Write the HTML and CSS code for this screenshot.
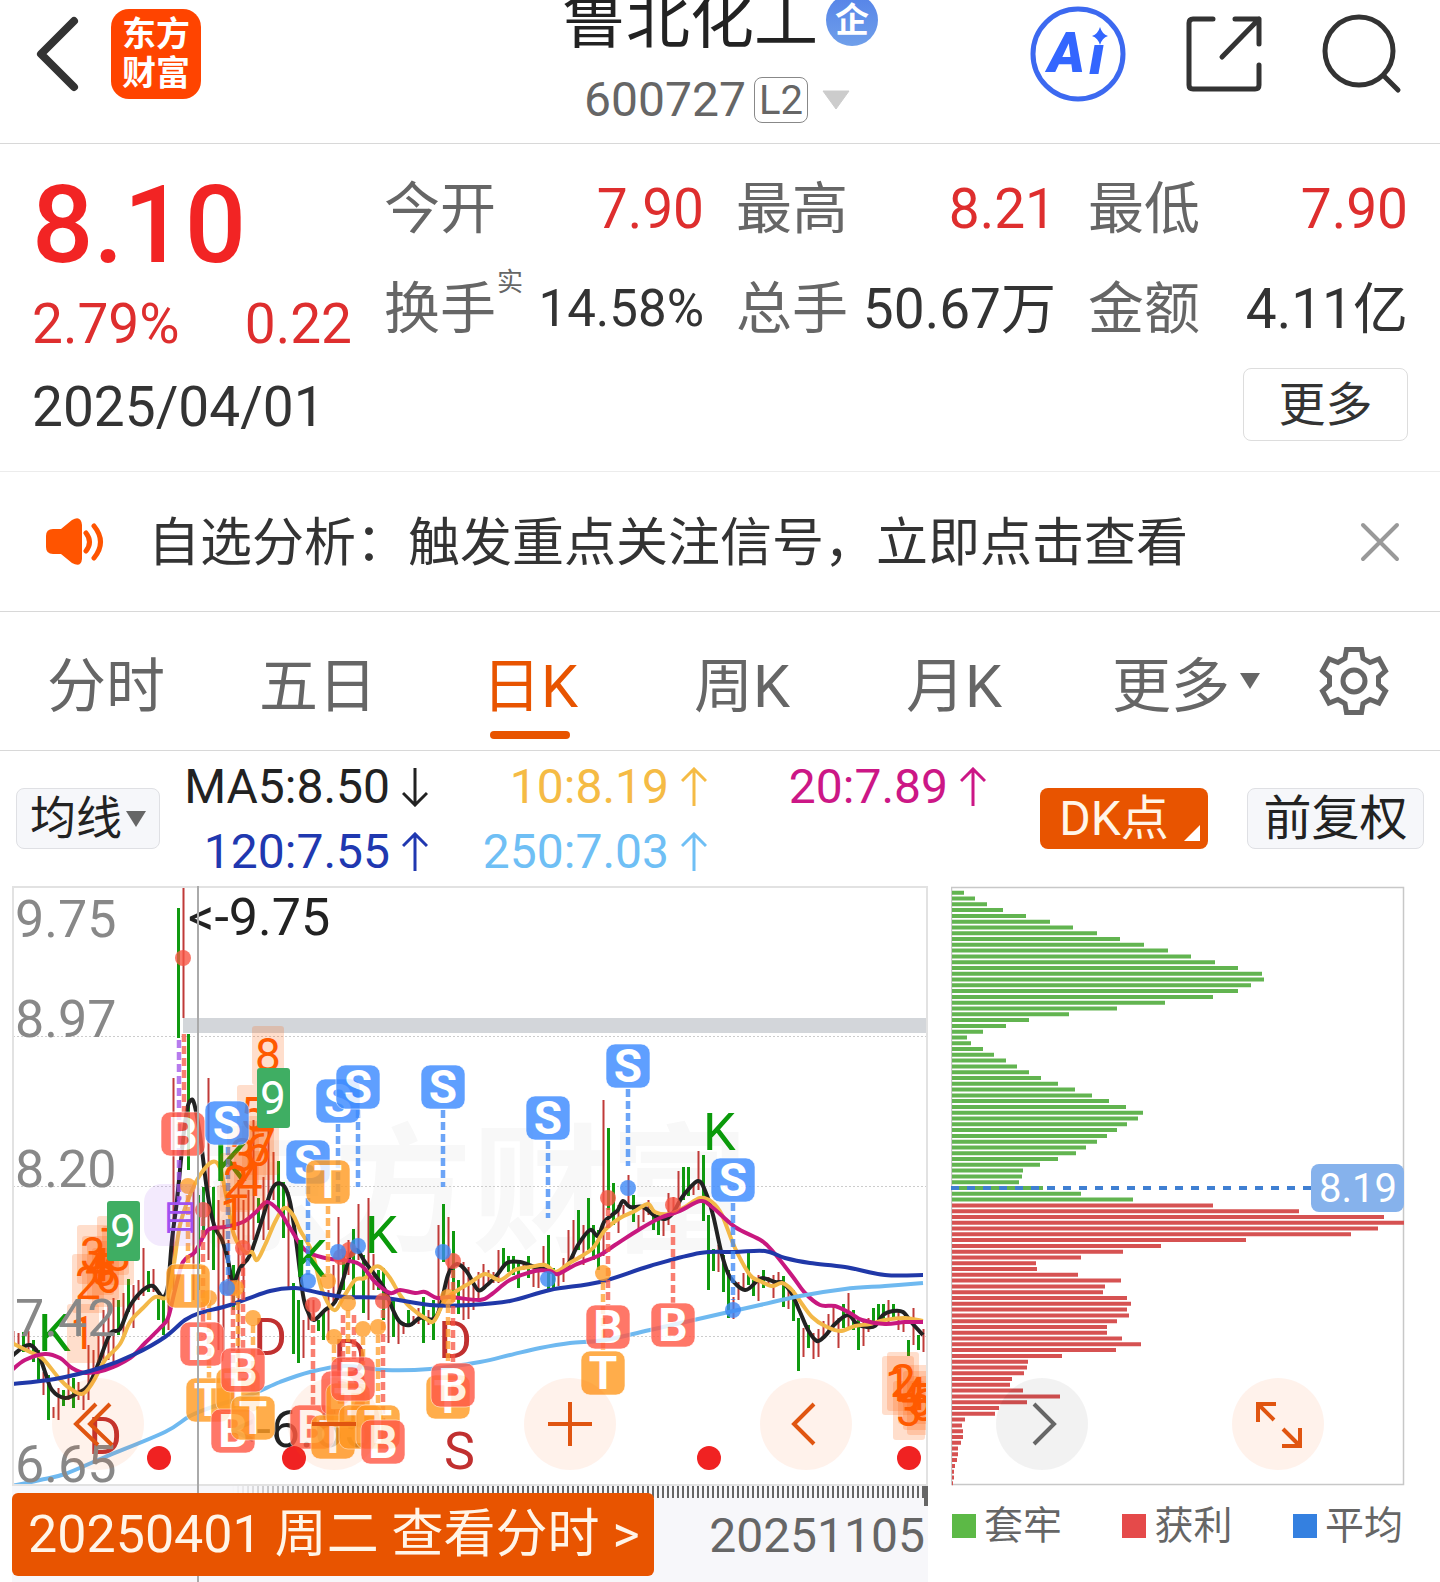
FILE: index.html
```html
<!DOCTYPE html>
<html lang="zh-CN">
<head>
<meta charset="utf-8">
<meta name="viewport" content="width=device-width, initial-scale=1">
<title>鲁北化工 600727</title>
<link rel="stylesheet" href="styles.css">
</head>
<body>
<header class="topbar">
  <div class="topbar-left">
    <button class="icon-btn" aria-label="返回">
      <svg width="44" height="76" viewBox="0 0 44 76"><path d="M38 5 L5 38 L38 71" fill="none" stroke="#333" stroke-width="8" stroke-linecap="round" stroke-linejoin="round"/></svg>
    </button>
    <a class="logo" href="#"><span>东方</span><span>财富</span></a>
  </div>
  <div class="stock">
    <h1 class="stock-name">鲁北化工<span class="ent-badge">企</span></h1>
    <div class="stock-code"><span>600727</span><span class="level">L2</span>
      <svg width="28" height="20" viewBox="0 0 28 20"><path d="M1 1H27L14 19Z" fill="#ccc" stroke="#ccc" stroke-linejoin="round"/></svg>
    </div>
  </div>
  <div class="topbar-right">
    <button class="icon-btn" aria-label="Ai">
      <svg width="96" height="96" viewBox="0 0 96 96">
        <circle cx="48" cy="48" r="45" fill="none" stroke="#3c69f0" stroke-width="5"/>
        <text class="ai-letter" x="18" y="66">A</text>
        <text class="ai-letter" x="59" y="68">ı</text>
        <path d="M70 21 Q72 28 78 30 Q72 32 70 39 Q68 32 62 30 Q68 28 70 21Z" fill="#3366ff"/>
      </svg>
    </button>
    <button class="icon-btn" aria-label="分享">
      <svg width="78" height="78" viewBox="0 0 78 78" fill="none" stroke="#333" stroke-width="5" stroke-linecap="round" stroke-linejoin="round"><path d="M28 4H8Q4 4 4 8V70Q4 74 8 74H70Q74 74 74 70V50M50 4H74V29M74 4L37 42"/></svg>
    </button>
    <button class="icon-btn" aria-label="搜索">
      <svg width="80" height="80" viewBox="0 0 80 80" fill="none" stroke="#333" stroke-width="5" stroke-linecap="round"><circle cx="37" cy="37" r="34"/><path d="M62 62L76 76"/></svg>
    </button>
  </div>
</header>

<section class="quote">
  <div class="quote-main">
    <div class="price-box">
      <div class="price">8.10</div>
      <div class="change"><span>2.79%</span><span>0.22</span></div>
    </div>
    <dl class="stats">
      <div class="stat up"><dt>今开</dt><dd>7.90</dd></div>
      <div class="stat up"><dt>最高</dt><dd>8.21</dd></div>
      <div class="stat up"><dt>最低</dt><dd>7.90</dd></div>
      <div class="stat"><dt>换手<sup>实</sup></dt><dd class="compact">14.58%</dd></div>
      <div class="stat"><dt>总手</dt><dd>50.67万</dd></div>
      <div class="stat"><dt>金额</dt><dd>4.11亿</dd></div>
    </dl>
  </div>
  <div class="quote-foot">
    <time datetime="2025-04-01">2025/04/01</time>
    <button class="more-btn">更多</button>
  </div>
</section>

<section class="notice">
  <svg width="60" height="50" viewBox="0 0 60 50"><path d="M8 12H16L27 3Q36 -2 37 8V42Q36 51 27 46L16 37H8Q1 37 1 30V19Q1 12 8 12Z" fill="#ff5400"/><path d="M41 16Q48 25 41 34M49 9Q62 25 49 41" fill="none" stroke="#ff5400" stroke-width="5" stroke-linecap="round"/></svg>
  <a class="notice-text" href="#">自选分析：触发重点关注信号，立即点击查看</a>
  <button class="icon-btn" aria-label="关闭">
    <svg width="40" height="40" viewBox="0 0 40 40"><path d="M3 3L37 37M37 3L3 37" stroke="#999" stroke-width="4" stroke-linecap="round"/></svg>
  </button>
</section>

<nav class="tabs">
  <button class="tab">分时</button>
  <button class="tab">五日</button>
  <button class="tab active">日K</button>
  <button class="tab">周K</button>
  <button class="tab">月K</button>
  <button class="tab more">更多<svg width="20" height="16" viewBox="0 0 20 16"><path d="M0 0H20L10 16Z" fill="#666"/></svg></button>
  <button class="tab gear" aria-label="设置">
    <svg width="70" height="70" viewBox="0 0 70 70" fill="none" stroke="#666" stroke-width="5" stroke-linejoin="miter"><path d="M27.5 3.500H42.500L44 12.500L51 16.500L60 13L66.500 25L59.500 31V39L66.500 45L60 57L51 53.500L44 57.500L42.500 66.500H27.500L26 57.500L19 53.500L10 57L3.500 45L10.500 39V31L3.500 25L10 13L19 16.500L26 12.500Z"/><circle cx="35" cy="35" r="11"/></svg>
  </button>
</nav>

<section class="ma-bar">
  <button class="chip-btn select">均线<svg width="20" height="16" viewBox="0 0 20 16"><path d="M0 0H20L10 16Z" fill="#666"/></svg></button>
  <div class="ma-values">
    <span class="ma ma5">MA5:8.50<svg viewBox="0 0 26 40"><path d="M13 1V38M1 26L13 38L25 26"/></svg></span>
    <span class="ma ma10">10:8.19<svg viewBox="0 0 26 40"><path d="M13 39V2M1 14L13 2L25 14"/></svg></span>
    <span class="ma ma20">20:7.89<svg viewBox="0 0 26 40"><path d="M13 39V2M1 14L13 2L25 14"/></svg></span>
    <span class="ma ma120">120:7.55<svg viewBox="0 0 26 40"><path d="M13 39V2M1 14L13 2L25 14"/></svg></span>
    <span class="ma ma250">250:7.03<svg viewBox="0 0 26 40"><path d="M13 39V2M1 14L13 2L25 14"/></svg></span>
  </div>
  <button class="chip-btn primary">DK点</button>
  <button class="chip-btn adjust">前复权</button>
</section>

<main class="charts">
  <section class="kline">
    <div class="plot">
      <svg id="kline" class="plot-svg" viewBox="12 886 916 600" role="img" aria-label="日K线图"></svg>
      <div class="controls">
        <button class="round" aria-label="最早"><svg viewBox="0 0 92 92"><path d="M44 26L24 46L46 67M58 26L38 46L60 67"/></svg></button>
        <button class="round" aria-label="缩小"><svg viewBox="0 0 92 92"><path d="M24 46H68"/></svg></button>
        <button class="round" aria-label="放大"><svg viewBox="0 0 92 92"><path d="M24 46H68M46 24V68"/></svg></button>
        <button class="round" aria-label="向前"><svg viewBox="0 0 92 92"><path d="M54 26L34 46L54 66"/></svg></button>
      </div>
    </div>
    <div class="axis">
      <button class="date-btn">20250401 周二 查看分时 &gt;</button>
      <span class="axis-end">20251105</span>
    </div>
    <i class="crosshair"></i>
  </section>
  <section class="chips">
    <div class="plot">
      <svg id="chips" class="plot-svg" viewBox="951 886 454 600" role="img" aria-label="筹码分布"></svg>
      <div class="controls">
        <button class="round grey" aria-label="向后"><svg viewBox="0 0 92 92"><path d="M38 26L58 46L38 66"/></svg></button>
        <button class="round" aria-label="全屏"><svg viewBox="0 0 92 92"><path d="M26 44V26H44M26 26L42 42M68 50V68H50M68 68L51 51"/></svg></button>
      </div>
    </div>
    <ul class="legend">
      <li class="lg-loss">套牢</li>
      <li class="lg-gain">获利</li>
      <li class="lg-avg">平均</li>
    </ul>
  </section>
</main>
<script src="chart.js"></script>
</body>
</html>
```

FILE: styles.css
```css
* { box-sizing: border-box; }
body {
  margin: 0;
  background: #fff;
  color: #333;
  font-family: Roboto, "Noto Sans CJK SC", sans-serif;
  font-size: 48px;
}
button {
  margin: 0;
  padding: 0;
  border: 0;
  background: none;
  color: inherit;
  font: inherit;
  cursor: pointer;
}
a { color: inherit; text-decoration: none; }
svg { display: block; flex: none; }

/* top bar */
.topbar {
  display: grid;
  grid-template-columns: 1fr auto 1fr;
  height: 144px;
  border-bottom: 1px solid #d8d8d8;
}
.topbar-left, .topbar-right {
  display: flex;
  align-items: center;
  height: 96px;
  margin-top: 6px;
}
.topbar-left { gap: 31px; padding-left: 36px; }
.topbar-right { justify-content: flex-end; gap: 59px; padding-right: 38px; }
.logo {
  display: flex;
  flex-direction: column;
  align-items: center;
  width: 90px;
  height: 90px;
  padding-top: 6px;
  border-radius: 18px;
  background: #ff4400;
  color: #fff;
  font-size: 34px;
  font-weight: 700;
  line-height: 39px;
}
.ai-letter { font: italic 900 56px Roboto, sans-serif; fill: #3366ff; }
.stock { display: flex; flex-direction: column; align-items: center; }
.stock-name {
  display: flex;
  align-items: center;
  gap: 8px;
  margin: 0;
  color: #222;
  font-size: 64px;
  font-weight: 400;
  line-height: 42px;
}
.ent-badge {
  width: 52px;
  height: 52px;
  margin: -6px 0 -4px;
  border-radius: 50%;
  background: linear-gradient(#5583e8, #6f9fea);
  color: #fff;
  font-size: 34px;
  font-weight: 700;
  line-height: 52px;
  text-align: center;
}
.stock-code {
  display: flex;
  align-items: center;
  height: 88px;
  margin-top: 14px;
  padding-right: 6px;
  color: #666;
  line-height: 56px;
}
.level {
  height: 46px;
  margin: 0 14px 0 8px;
  padding: 0 4px;
  border: 1px solid #888;
  border-radius: 8px;
  font-size: 40px;
  line-height: 46px;
}

/* quote */
.quote { padding: 13px 32px 30px 32px; border-bottom: 1px solid #ececec; }
.quote-main { display: grid; grid-template-columns: 320px 1fr; column-gap: 32px; height: 211px; }
.price-box { padding-top: 12px; color: #f22424; }
.price { font-size: 108px; font-weight: 500; line-height: 112px; }
.change {
  display: flex;
  justify-content: space-between;
  color: #de2e2e;
  font-size: 55px;
  line-height: 86px;
}
.stats {
  display: grid;
  grid-template-columns: repeat(3, 1fr);
  grid-auto-rows: 100px;
  column-gap: 32px;
  margin: 0;
  padding-top: 2px;
  line-height: 100px;
}
.stat { display: flex; justify-content: space-between; white-space: nowrap; }
.stat dt { position: relative; color: #666; font-size: 56px; }
.stat dt sup { position: absolute; left: 113px; top: 10px; font-size: 26px; line-height: 26px; }
.stat dd { margin: 0; font-size: 55px; }
.stat dd.compact { font-size: 51px; }
.stat.up dd { color: #de2e2e; }
.quote-foot { display: flex; justify-content: space-between; align-items: center; height: 73px; font-size: 55px; }
.quote-foot time { padding-top: 4px; }
.more-btn {
  width: 165px;
  height: 73px;
  border: 1px solid #ddd;
  border-radius: 8px;
  font-size: 47px;
  line-height: 72px;
}

/* notice */
.notice { display: flex; align-items: center; height: 140px; padding: 0 40px 0 45px; border-bottom: 1px solid #d8d8d8; }
.notice-text { flex: 1; margin-left: 43px; padding-top: 4px; font-size: 52px; line-height: 72px; white-space: nowrap; }

/* tabs */
.tabs {
  display: grid;
  grid-template-columns: repeat(6, 212fr) 168fr;
  height: 139px;
  border-bottom: 1px solid #d8d8d8;
  color: #666;
  font-size: 59px;
}
.tab { position: relative; display: flex; align-items: center; justify-content: center; white-space: nowrap; }
.tab.more { gap: 10px; padding-left: 40px; }
.tab.gear { padding-right: 4px; }
.tab.active { color: #e85400; }
.tab.active::after {
  content: "";
  position: absolute;
  left: calc(50% - 40px);
  bottom: 11px;
  width: 80px;
  height: 8px;
  border-radius: 4px;
  background: #e85400;
}

/* moving averages */
.ma-bar { display: flex; align-items: center; height: 135px; padding: 0 16px; }
.chip-btn {
  display: flex;
  align-items: center;
  justify-content: center;
  width: 144px;
  height: 61px;
  border: 1px solid #dfe0e4;
  border-radius: 8px;
  background: #f6f7fa;
  color: #222;
  line-height: 61px;
  white-space: nowrap;
}
.chip-btn.select { gap: 4px; font-size: 46px; }
.chip-btn.primary {
  position: relative;
  width: 168px;
  margin-left: auto;
  padding-right: 20px;
  border: 0;
  background: #e85400;
  color: #fff5e8;
}
.chip-btn.primary::after {
  content: "";
  position: absolute;
  right: 8px;
  bottom: 8px;
  border: solid transparent;
  border-width: 8px;
  border-right-color: #fff;
  border-bottom-color: #fff;
}
.chip-btn.adjust { width: 177px; margin-left: 39px; }
.ma-values { display: grid; grid-template-columns: 268px 279px 279px; line-height: 65px; padding-top: 1px; }
.ma { display: flex; align-items: center; justify-content: flex-end; gap: 12px; }
.ma svg { width: 26px; height: 40px; fill: none; stroke: currentColor; stroke-width: 3px; }
.ma5 { color: #222; }
.ma10 { color: #f5bb45; }
.ma20 { color: #cc1786; }
.ma120 { color: #2038b0; }
.ma250 { color: #6fbff5; }

/* charts */
.charts { display: grid; grid-template-columns: 916fr 454fr; column-gap: 23px; padding: 0 35px 0 12px; }
.kline, .plot { position: relative; }
.plot-svg { width: 100%; height: auto; }
.controls {
  position: absolute;
  left: 40px;
  right: 76px;
  bottom: 16px;
  display: flex;
  justify-content: space-between;
}
.chips .controls { left: 45px; right: 81px; }
.round { width: 92px; height: 92px; border-radius: 50%; background: rgba(255, 84, 0, 0.08); }
.round svg { fill: none; stroke: #e05510; stroke-width: 4px; }
.round.grey { background: rgba(0, 0, 0, 0.05); }
.round.grey svg { stroke: #666; }
.axis {
  position: relative;
  z-index: 1;
  display: flex;
  justify-content: space-between;
  height: 96px;
  padding-top: 7px;
  background:
    linear-gradient(#666, #666) right top / 4px 20px no-repeat,
    linear-gradient(#aaa, #aaa) 20.2% top / 2px 100% no-repeat,
    linear-gradient(90deg, #f7f7fa 24%, transparent 36%) left top / 100% 12px no-repeat,
    repeating-linear-gradient(90deg, #666 0 2px, #f7f7fa 2px 5px) left top / 100% 12px no-repeat,
    #f7f7fa;
}
.date-btn {
  height: 83px;
  padding: 0 14px 0 16px;
  border-radius: 6px;
  background: #e85400;
  color: #fff5e8;
  font-size: 52px;
  line-height: 84px;
  white-space: nowrap;
}
.axis-end { padding-right: 3px; color: #666; line-height: 85px; }
.crosshair { position: absolute; left: 20.2%; top: 0; bottom: 0; width: 2px; background: #aaa; }
.legend {
  display: flex;
  justify-content: space-between;
  margin: 0;
  padding: 9px 2px 0 1px;
  list-style: none;
  color: #666;
  font-size: 39px;
  line-height: 62px;
}
.legend li { display: flex; align-items: center; gap: 8px; }
.legend li::before { content: ""; width: 24px; height: 24px; background: #5cb946; }
.legend .lg-gain::before { background: #e54a4a; }
.legend .lg-avg::before { background: #3480e0; }

/* chart drawing */
.frame { fill: none; stroke: #e2e2e2; stroke-width: 2px; }
.grid-line { stroke: #ccc; stroke-width: 1px; stroke-dasharray: 2 2; }
.watermark { font-size: 138px; font-weight: 700; fill: #f8f8f8; }
.y-label { font-size: 52px; fill: #888; }
.extreme { font-size: 52px; fill: #222; }
.k-up { stroke: #c03a38; stroke-width: 2px; fill: none; }
.k-down { stroke: #109a10; stroke-width: 3px; fill: none; }
.line { fill: none; stroke-width: 4px; stroke-linejoin: round; }
.tag { font-size: 46px; font-weight: 700; fill: #fff; text-anchor: middle; }
.count { font-size: 46px; fill: #ff5a00; text-anchor: middle; }
.count.nine { fill: #fff; }
.sig { font-size: 52px; }
.sig-k { fill: #0b9a0b; }
.sig-d { fill: #c03030; }
.self { font-size: 38px; fill: #a050f0; text-anchor: middle; }
.avg { font-size: 40px; fill: #fff; text-anchor: middle; }
```

FILE: chart.js
```js
const NS = "http://www.w3.org/2000/svg";
function add(parent, name, attrs, text) {
  const el = document.createElementNS(NS, name);
  for (const key in attrs) el.setAttribute(key, attrs[key]);
  if (text) el.textContent = text;
  parent.appendChild(el);
  return el;
}
// Catmull-Rom spline through the given points
function smooth(str) {
  const p = str.split(" ").map(s => s.split(",").map(Number));
  let d = "M" + p[0];
  for (let i = 0; i < p.length - 1; i++) {
    const a = p[i - 1] || p[i], b = p[i], c = p[i + 1], e = p[i + 2] || c;
    d += "C" + [b[0] + (c[0] - a[0]) / 6, b[1] + (c[1] - a[1]) / 6, c[0] - (e[0] - b[0]) / 6, c[1] - (e[1] - b[1]) / 6, c[0], c[1]].map(n => n.toFixed(1));
  }
  return d;
}

const k = document.getElementById("kline");
add(k, "text", { class: "watermark", x: 196, y: 1240 }, "东方财富");
[1036, 1186, 1336].forEach(y => add(k, "line", { class: "grid-line", x1: 13, x2: 927, y1: y + 0.5, y2: y + 0.5 }));
add(k, "rect", { x: 183, y: 1018, width: 744, height: 15, fill: "#d3d6da" });

// low/high range of each session, one every 5 units: r = rise, g = fall
const sessions = `r1331-1346 r1333-1347 g1332-1352 r1331-1350 g1340-1362 g1350-1380 r1372-1395 g1375-1420 r1407-1418 r1388-1420
g1390-1406 r1366-1400 g1378-1408 r1382-1400 r1393-1410 r1345-1400 r1350-1375 r1335-1372 r1310-1372 r1305-1360
r1298-1362 g1300-1335 r1293-1335 g1279-1312 r1285-1328 r1280-1300 r1248-1296 g1271-1292 r1269-1292 g1295-1320
g1300-1335 r1290-1330 r1078-1290 g908-1038 r886-1018 g1034-1170 r1190-1300 g1195-1290 g1187-1235 r1078-1260
g1187-1270 r1200-1350 r1220-1352 r1240-1290 g1265-1310 r1180-1370 r1200-1300 r1190-1250 r1120-1240 g1198-1223
r1177-1240 r1128-1230 r1152-1200 g1161-1210 g1182-1238 r1192-1287 g1283-1354 g1300-1363 r1320-1358 r1300-1330
r1300-1320 g1320-1331 g1310-1340 r1290-1340 r1265-1303 r1217-1300 g1255-1290 r1240-1275 g1229-1300 r1204-1260
g1255-1313 r1198-1320 r1254-1290 g1270-1290 g1268-1320 r1300-1343 g1300-1337 r1320-1344 r1322-1334 g1310-1327
r1316-1325 r1308-1324 g1297-1343 r1310-1325 g1300-1340 r1225-1310 g1204-1262 r1217-1290 g1231-1300 g1280-1314
r1262-1320 r1267-1319 r1282-1310 r1272-1300 r1264-1290 r1270-1285 r1272-1283 r1250-1283 g1248-1268 g1256-1272
g1256-1275 g1262-1288 r1262-1270 g1256-1278 r1268-1287 r1264-1288 r1246-1270 g1235-1292 g1268-1290 r1274-1286
r1258-1282 r1230-1265 r1220-1262 g1210-1250 r1225-1265 g1198-1250 g1225-1260 g1230-1270 r1100-1256 g1128-1210
g1183-1225 r1205-1233 r1205-1215 r1175-1205 g1195-1222 r1215-1230 r1205-1222 r1200-1215 g1215-1230 g1215-1235
r1218-1236 r1193-1225 r1197-1215 r1171-1200 g1167-1200 g1167-1196 r1183-1195 r1151-1190 g1155-1221 g1215-1290
g1249-1271 r1245-1272 g1255-1292 g1270-1318 r1297-1319 r1282-1300 r1273-1290 g1253-1285 g1280-1296 r1275-1301
g1270-1288 r1277-1285 r1275-1298 r1272-1284 g1276-1307 r1290-1309 g1290-1321 g1318-1371 r1328-1357 g1325-1348
r1333-1359 r1329-1357 r1321-1338 r1314-1330 r1307-1327 r1318-1348 g1304-1328 r1293-1330 g1310-1330 g1320-1350
r1320-1346 r1318-1332 g1308-1325 g1304-1322 g1304-1320 r1300-1325 g1304-1318 r1310-1330 r1322-1332 g1340-1356
r1308-1345 g1335-1350 r1329-1352`.split(/\s+/);
const paths = { r: "", g: "" };
sessions.forEach((s, i) => {
  const [hi, lo] = s.slice(1).split("-");
  paths[s[0]] += `M${13.5 + i * 5} ${hi}V${lo}`;
});
add(k, "path", { class: "k-up", d: paths.r });
add(k, "path", { class: "k-down", d: paths.g });

add(k, "text", { class: "extreme", x: 188, y: 935 }, "<-9.75");
add(k, "text", { class: "extreme", x: 230, y: 1447 }, "<-6.65");

const averages = {
  "#222": "12,1356 22,1348 30,1345 38,1353 45,1372 52,1390 65,1398 78,1393 88,1386 97,1367 110,1334 120,1329 130,1306 143,1290 153,1286 163,1297 168,1285 172,1240 177,1200 183,1140 187,1110 190,1101 194,1103 200,1135 207,1190 214,1225 222,1240 228,1260 233,1283 240,1268 250,1255 262,1220 270,1194 276,1184 284,1186 290,1202 296,1240 303,1295 308,1312 314,1320 325,1310 335,1302 343,1280 350,1256 357,1250 365,1262 375,1275 385,1290 393,1310 400,1322 410,1325 420,1318 433,1319 440,1308 448,1275 457,1264 467,1272 478,1290 487,1285 497,1275 507,1263 520,1262 535,1267 548,1270 556,1273 567,1266 578,1245 590,1230 598,1236 604,1222 612,1215 618,1210 623,1201 630,1207 643,1207 655,1216 665,1219 673,1213 683,1196 698,1181 706,1193 713,1215 722,1255 730,1277 745,1290 757,1281 763,1278 775,1282 783,1283 792,1294 800,1312 808,1330 817,1341 825,1336 835,1324 848,1315 857,1324 867,1327 875,1326 883,1315 893,1311 903,1312 912,1323 923,1335",
  "#f3b848": "12,1343 28,1351 42,1358 58,1377 68,1387 82,1394 93,1382 105,1360 120,1344 130,1322 143,1308 155,1297 167,1297 173,1270 180,1225 190,1195 200,1175 212,1162 220,1168 227,1200 234,1235 245,1252 252,1252 257,1260 265,1245 275,1222 284,1208 293,1215 300,1230 312,1252 322,1290 334,1310 343,1298 355,1280 365,1278 373,1268 380,1267 390,1278 400,1295 410,1307 425,1318 434,1321 445,1300 458,1290 470,1283 485,1274 500,1280 515,1270 530,1267 545,1265 556,1272 568,1264 580,1257 593,1248 605,1230 620,1218 635,1211 648,1204 655,1212 670,1214 685,1207 700,1198 712,1202 722,1215 735,1248 750,1275 760,1281 772,1286 782,1283 792,1290 802,1304 812,1317 825,1326 840,1331 855,1326 870,1324 885,1320 905,1318 923,1321",
  "#c8187f": "12,1370 25,1360 45,1354 60,1358 72,1368 85,1373 105,1370 130,1358 145,1343 160,1328 168,1318 175,1290 183,1262 195,1252 208,1230 225,1227 243,1222 255,1213 267,1202 280,1212 290,1228 305,1250 325,1258 350,1261 362,1266 375,1282 390,1293 400,1290 415,1293 425,1292 437,1298 450,1297 480,1300 492,1294 510,1280 535,1271 550,1271 558,1274 575,1265 600,1255 615,1245 640,1229 660,1218 680,1211 700,1201 712,1207 735,1227 762,1241 775,1254 793,1277 805,1293 820,1305 835,1306 850,1313 862,1320 885,1324 905,1322 923,1322",
  "#2038a8": "12,1384 55,1379 100,1368 135,1354 165,1337 185,1320 200,1313 230,1305 270,1291 295,1288 320,1293 345,1297 385,1298 430,1305 470,1305 510,1301 550,1290 600,1282 650,1266 700,1253 735,1252 765,1251 785,1258 810,1263 845,1267 885,1275 923,1275",
  "#6fb9f0": "12,1486 40,1480 65,1474 105,1457 165,1432 190,1416 215,1406 250,1395 280,1382 310,1372 345,1366 385,1370 430,1369 480,1362 510,1355 540,1348 570,1343 605,1340 650,1330 720,1314 760,1305 800,1296 845,1289 885,1286 923,1283"
};
for (const color in averages) add(k, "path", { class: "line", stroke: color, d: smooth(averages[color]) });

// DK signals
[["K", 38, 1351], ["K", 214, 1181], ["K", 294, 1277], ["K", 365, 1253], ["K", 703, 1150]].forEach(([t, x, y]) => add(k, "text", { class: "sig sig-k", x, y }, t));
[["D", 88, 1454], ["D", 253, 1355], ["D", 333, 1376], ["D", 438, 1358], ["S", 444, 1469]].forEach(([t, x, y]) => add(k, "text", { class: "sig sig-d", x, y }, t));

const RED = "#f85544", ORANGE = "#ff9d2a", BLUE = "#3d88f5", PURPLE = "#a050e8";
// dashed leaders: colour, x, y1, y2
[[PURPLE, 179, 1040, 1200], [RED, 184, 1034, 1112], [BLUE, 228, 1147, 1280], [BLUE, 308, 1186, 1275], [BLUE, 338, 1124, 1202], [BLUE, 358, 1110, 1187],
 [BLUE, 443, 1110, 1187], [BLUE, 548, 1141, 1218], [BLUE, 628, 1089, 1166], [BLUE, 733, 1203, 1300], [ORANGE, 328, 1206, 1273], [RED, 608, 1208, 1305],
 [RED, 673, 1225, 1303], [ORANGE, 603, 1282, 1350], [RED, 313, 1313, 1405], [RED, 343, 1315, 1360], [ORANGE, 348, 1310, 1360], [RED, 354, 1315, 1360],
 [ORANGE, 334, 1345, 1362], [ORANGE, 363, 1337, 1365], [ORANGE, 378, 1335, 1405], [RED, 383, 1310, 1420], [RED, 453, 1270, 1362], [ORANGE, 448, 1305, 1362],
 [ORANGE, 188, 1195, 1265], [RED, 203, 1218, 1322], [ORANGE, 209, 1300, 1378], [RED, 243, 1256, 1348], [ORANGE, 238, 1290, 1370], [RED, 233, 1295, 1410], [ORANGE, 253, 1325, 1397]
].forEach(([c, x, y1, y2]) => add(k, "line", { x1: x, x2: x, y1, y2, stroke: c, "stroke-width": 4.5, "stroke-dasharray": "8 4", opacity: 0.75 }));
[[RED, "183,958 203,1210 243,1248 231,1288 313,1305 341,1257 349,1250 383,1301 453,1261 608,1198 673,1205"],
 [ORANGE, "188,1186 209,1298 236,1288 253,1318 328,1281 348,1303 334,1337 363,1329 378,1327 448,1297 603,1273"],
 [BLUE, "227,1288 308,1281 338,1252 358,1246 443,1252 548,1279 628,1188 733,1310"]
].forEach(([c, list]) => list.split(" ").forEach(s => {
  const [x, y] = s.split(",");
  add(k, "circle", { cx: x, cy: y, r: 8, fill: c, opacity: 0.8 });
}));

// nine-count sequence
[["1", 83, 1333], ["2", 88, 1283], ["3", 93, 1254], ["4", 98, 1265], ["5", 103, 1270], ["6", 108, 1277], ["7", 113, 1245], ["8", 118, 1255], ["1", 233, 1214],
 ["2", 236, 1182], ["3", 243, 1155], ["4", 250, 1180], ["5", 253, 1114], ["6", 258, 1150], ["7", 263, 1145], ["8", 268, 1055],
 ["1", 898, 1385], ["2", 903, 1381], ["3", 909, 1410], ["4", 914, 1394], ["5", 919, 1400], ["6", 923, 1405]
].forEach(([t, x, y]) => {
  add(k, "rect", { x: x - 16, y: y - 29, width: 32, height: 59, rx: 3, fill: "#ff5a00", opacity: 0.2 });
  add(k, "text", { class: "count", x, y: y + 16 }, t);
});
[[123, 1231], [273, 1098]].forEach(([x, y]) => {
  add(k, "rect", { x: x - 16, y: y - 30, width: 33, height: 60, rx: 3, fill: "#3fae63" });
  add(k, "text", { class: "count nine", x, y: y + 16 }, "9");
});
[["9.75", 937], ["8.97", 1037], ["8.20", 1187], ["7.42", 1336], ["6.65", 1482]].forEach(([t, y]) => add(k, "text", { class: "y-label", x: 15, y }, t));
add(k, "rect", { x: 144, y: 1184, width: 62, height: 62, rx: 18, fill: "#a050f0", opacity: 0.12 });
add(k, "text", { class: "self", x: 180, y: 1229 }, "自");

// trade markers
const fills = { S: "#3d8bff", B: "#ff5a48", T: "#ff9c24" };
[["B", 183, 1134], ["S", 227, 1123], ["S", 308, 1162], ["T", 328, 1182], ["S", 338, 1101], ["S", 358, 1087], ["S", 443, 1087], ["S", 548, 1118],
 ["S", 628, 1066], ["S", 733, 1180], ["T", 188, 1286], ["B", 202, 1344], ["T", 208, 1400], ["T", 238, 1390], ["B", 243, 1370], ["B", 233, 1431],
 ["T", 253, 1418], ["B", 312, 1427], ["T", 333, 1437], ["B", 343, 1393], ["T", 348, 1405], ["B", 353, 1379], ["T", 361, 1427], ["T", 378, 1427],
 ["B", 383, 1442], ["T", 448, 1397], ["B", 453, 1385], ["T", 603, 1373], ["B", 608, 1327], ["B", 673, 1325]
].forEach(([t, x, y]) => {
  const g = add(k, "g", { opacity: 0.82 });
  add(g, "rect", { x: x - 22, y: y - 22, width: 44, height: 44, rx: 9, fill: fills[t], stroke: "#fff", "stroke-opacity": 0.6 });
  add(g, "text", { class: "tag", x, y: y + 16 }, t);
});
[159, 294, 709, 909].forEach(x => add(k, "circle", { cx: x, cy: 1458, r: 12, fill: "#f02222" }));
add(k, "rect", { class: "frame", x: 13, y: 887, width: 914, height: 598 });

// cost distribution
const c = document.getElementById("chips");
add(c, "rect", { x: 951.5, y: 887.5, width: 452, height: 597, fill: "none", stroke: "#c8c8c8", "stroke-width": 1.5 });
const loss = [12, 23, 35, 51, 74, 98, 121, 145, 168, 192, 216, 239, 263, 286, 310, 312, 299, 286, 261, 213, 165, 117, 77, 54, 31, 15, 19, 31, 42, 54, 65, 77, 89, 106, 123, 140, 157, 174, 191, 186, 175, 165, 155, 145, 134, 124, 106, 88, 71, 70, 67, 91, 129, 181];
const gain = [261, 347, 432, 452, 426, 399, 294, 209, 171, 129, 84, 85, 126, 169, 153, 151, 175, 179, 175, 177, 165, 155, 155, 170, 189, 164, 110, 76, 75, 72, 60, 58, 71, 108, 75, 47, 43, 13, 10, 11, 11, 9, 6, 6, 5, 3, 2, 2, 1];
const bars = (list, from, color) => add(c, "path", {
  d: list.map((w, i) => `M952 ${(892.7 + (from + i) * 5.79).toFixed(1)}h${w}`).join(""),
  stroke: color, "stroke-width": 4
});
bars(loss, 0, "#62b450");
bars(gain, loss.length, "#d65252");
add(c, "line", { x1: 951, x2: 1311, y1: 1188, y2: 1188, stroke: "#3f7fd2", "stroke-width": 4, "stroke-dasharray": "8 8" });
add(c, "rect", { x: 1311, y: 1164, width: 93, height: 48, rx: 8, fill: "#86b2ec" });
add(c, "text", { class: "avg", x: 1358, y: 1202 }, "8.19");
```
